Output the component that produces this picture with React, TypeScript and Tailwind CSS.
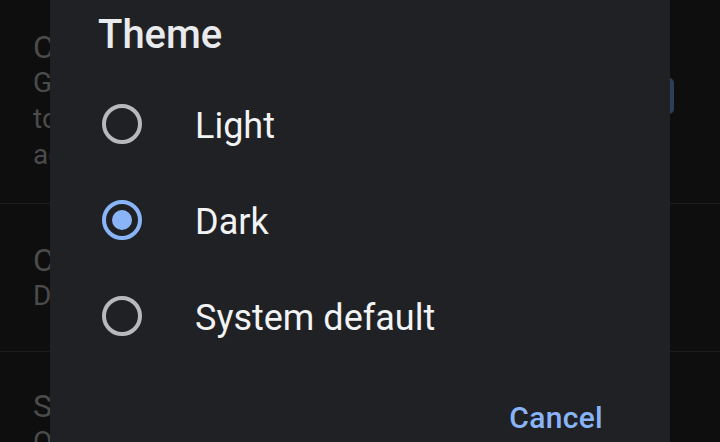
import React from 'react';

const options = [
  { label: 'Light', selected: false },
  { label: 'Dark', selected: true },
  { label: 'System default', selected: false },
];

function Radio({ selected }: { selected: boolean }) {
  if (selected) {
    return (
      <div className="flex h-[40px] w-[40px] shrink-0 items-center justify-center rounded-full border-[4px] border-[#8ab4f8]">
        <div className="h-[20px] w-[20px] rounded-full bg-[#8ab4f8]" />
      </div>
    );
  }
  return <div className="h-[40px] w-[40px] shrink-0 rounded-full border-[4px] border-[#b8b9ba]" />;
}

export default function App() {
  return (
    <div
      className="relative h-[442px] w-[720px] overflow-hidden bg-[#0e0e0e]"
      style={{ fontFamily: 'Roboto, "Noto Sans", sans-serif' }}
    >
      {/* settings list behind the scrim, only its left edge shows */}
      <div className="text-[#4b4b4b]">
        <div className="h-[204px] border-b border-[#1c1c1c] pl-[33px] pt-[29px]">
          <div className="w-[17px] overflow-hidden whitespace-nowrap">
            <div className="text-[32px] leading-[36px]">Choose theme</div>
            <div className="text-[28px] leading-[36px]">Get a darker look</div>
            <div className="text-[28px] leading-[36px]">to save battery and</div>
            <div className="text-[28px] leading-[36px]">adjust for low light</div>
          </div>
        </div>
        <div className="h-[148px] border-b border-[#1c1c1c] pl-[33px] pt-[38px]">
          <div className="w-[17px] overflow-hidden whitespace-nowrap">
            <div className="text-[32px] leading-[36px]">Colour scheme</div>
            <div className="text-[28px] leading-[36px]">Default</div>
          </div>
        </div>
        <div className="pl-[33px] pt-[36px]">
          <div className="w-[17px] overflow-hidden whitespace-nowrap">
            <div className="text-[32px] leading-[36px]">Sync settings</div>
            <div className="text-[28px] leading-[36px]">Off</div>
          </div>
        </div>
      </div>

      {/* button peeking out behind dialog */}
      <div className="absolute left-[570px] top-[78px] h-[36px] w-[104px] rounded-[5px] bg-[#2f3e57]" />

      {/* dialog */}
      <div className="absolute left-[50px] top-[-20px] h-[490px] w-[620px] bg-[#202124]">
        <div className="pl-[48px] pt-[35px] text-[40px] font-medium leading-[40px] text-[#e8eaed]">Theme</div>
        <div className="mt-[21px]">
          {options.map((o) => (
            <div key={o.label} className="flex h-[96px] items-center pl-[52px]">
              <Radio selected={o.selected} />
              <span className="ml-[53px] mt-[3px] text-[36px] leading-none text-[#f1f3f4]">{o.label}</span>
            </div>
          ))}
        </div>
        <div className="mt-[39px] flex justify-end pr-[67px]">
          <span className="text-[30px] font-medium leading-none tracking-[0.3px] text-[#8ab4f8]">Cancel</span>
        </div>
      </div>
    </div>
  );
}
